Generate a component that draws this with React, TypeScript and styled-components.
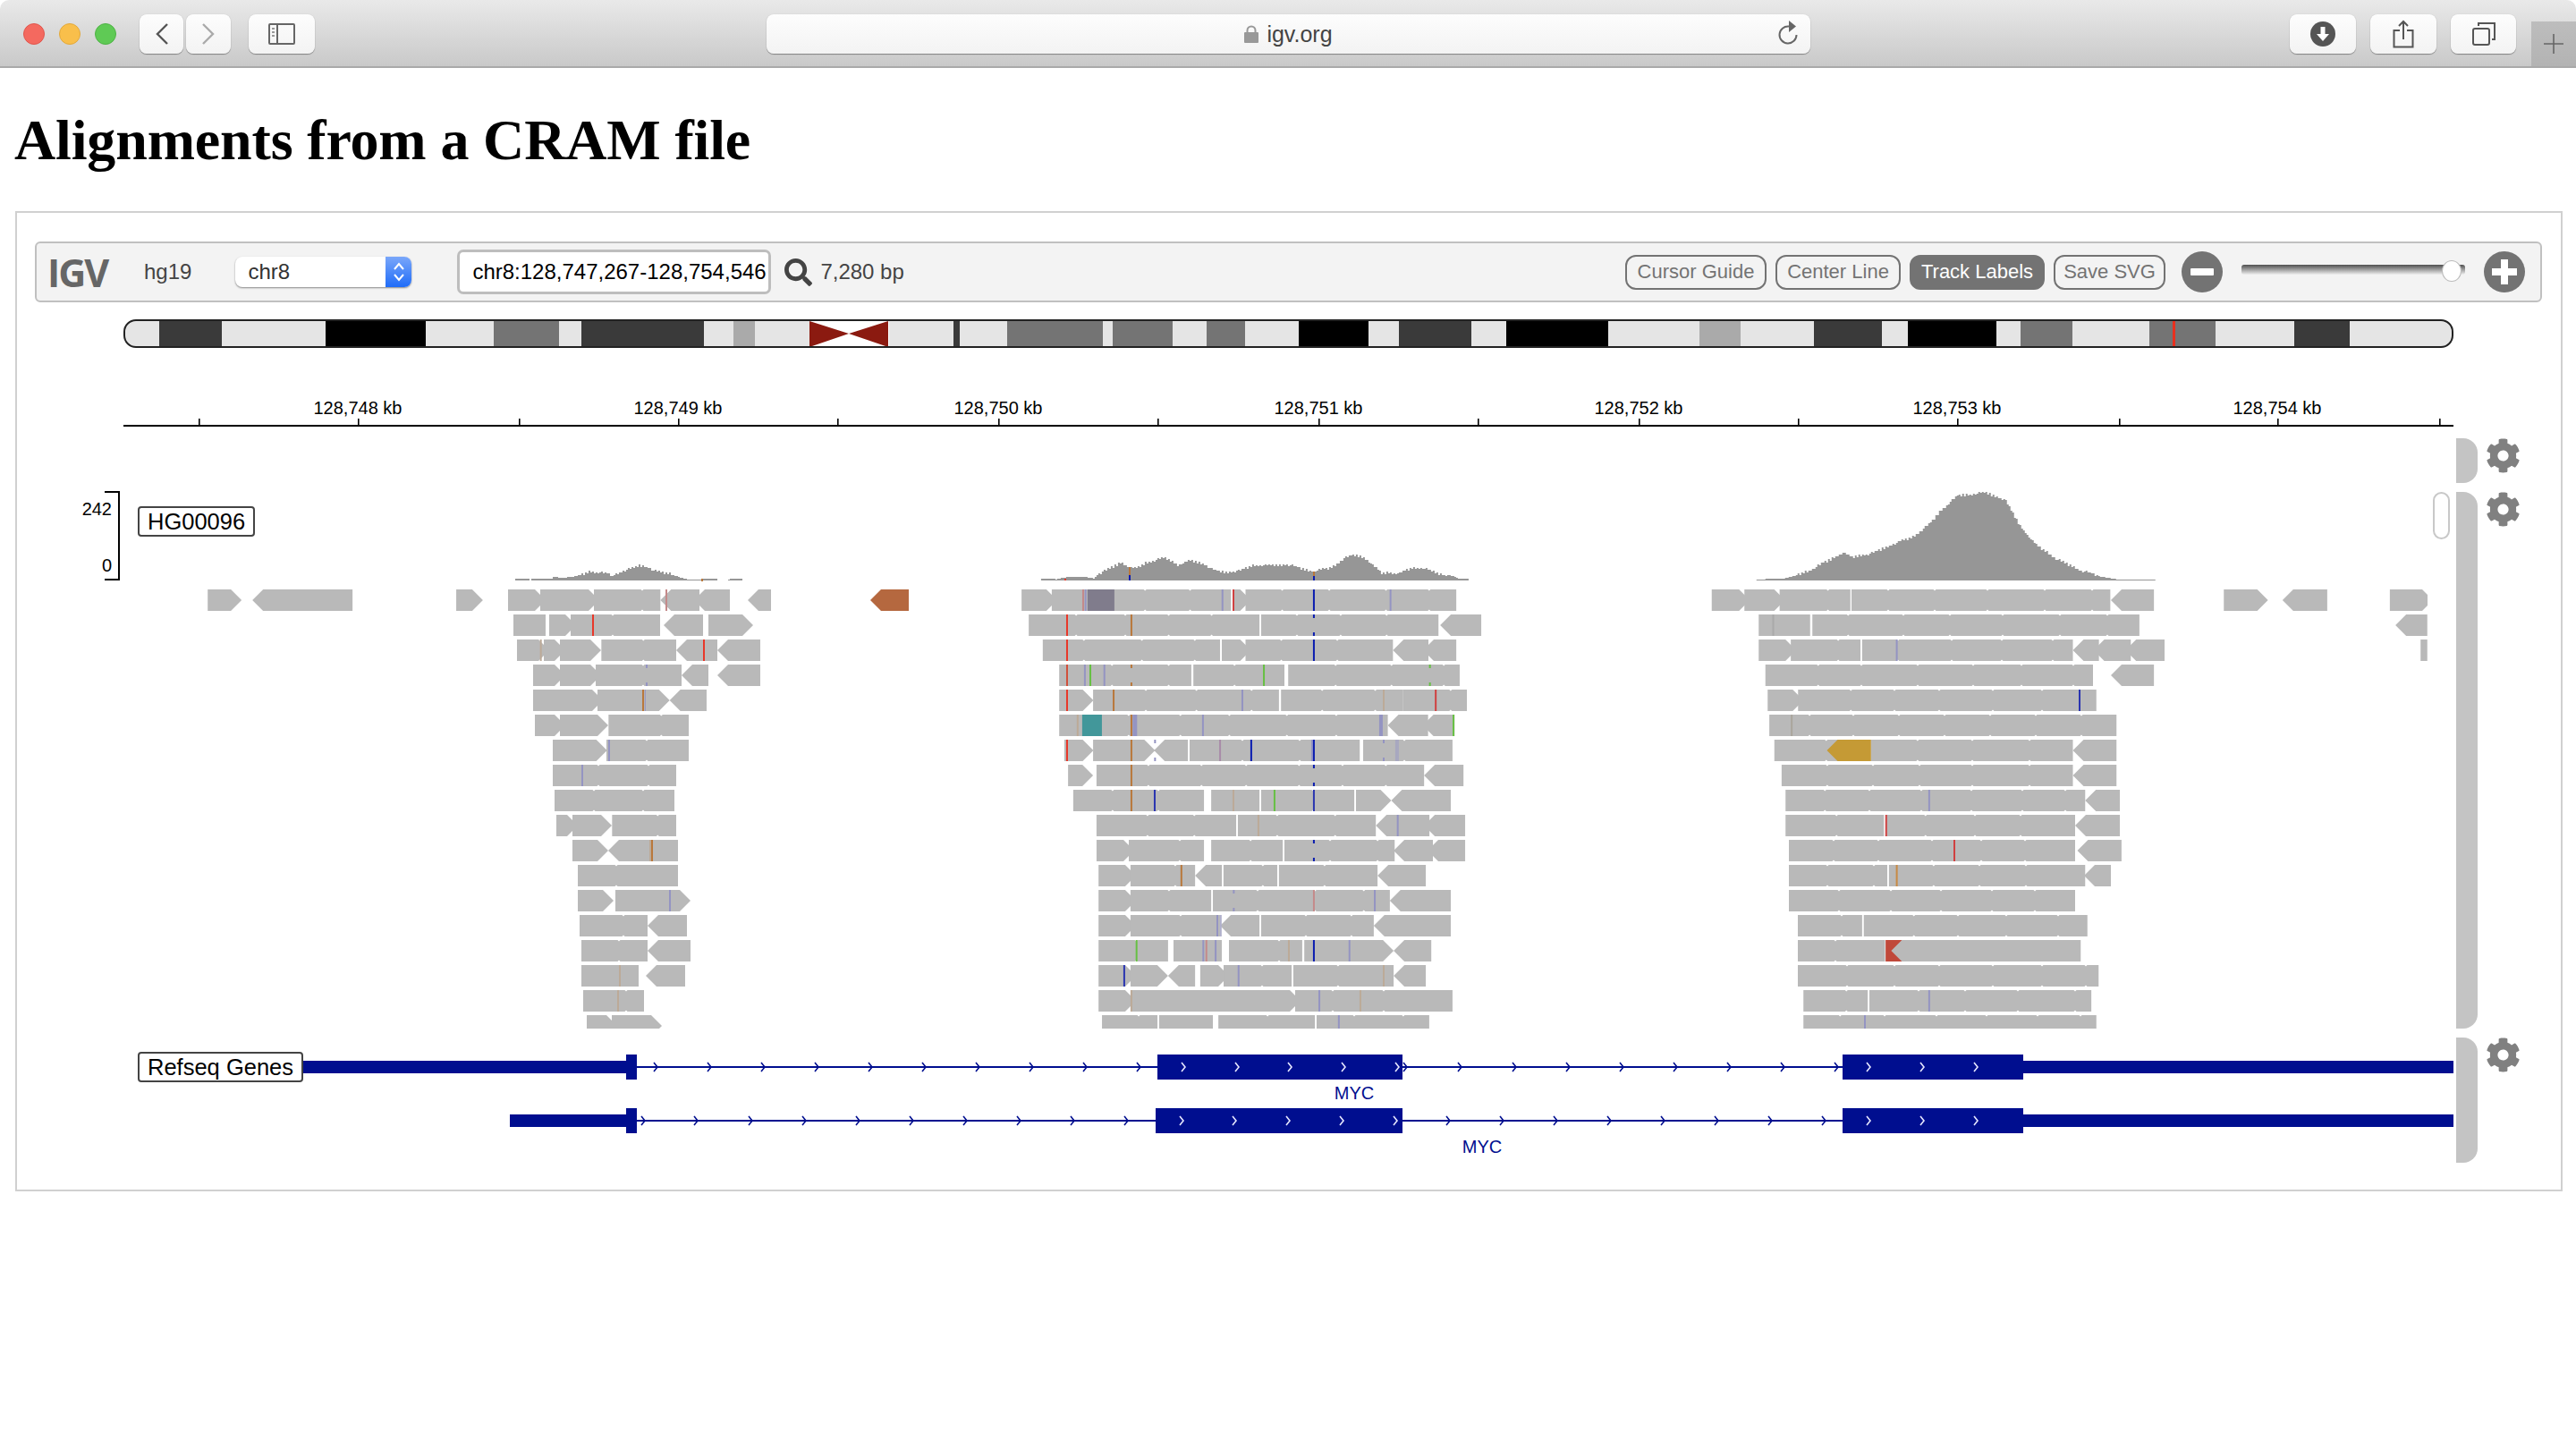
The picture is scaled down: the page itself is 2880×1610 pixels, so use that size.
import React from 'react';
import styled, { createGlobalStyle } from 'styled-components';
import { FaCog, FaSearch } from 'react-icons/fa';

const GlobalStyle = createGlobalStyle`
  html, body {
    margin: 0;
    background: #fff;
    font-family: "Liberation Sans", Arial, sans-serif;
  }
`;

const GREY = '#b9b9b9';
const BLUE = '#000e8f';
const RED = '#e8382a';
const ORANGE = '#b9783c';
const PURPLE = '#9494c2';
const NAVY = '#0a1cb0';
const GREEN = '#66c043';
const TAN = '#bcaa98';
const PINK = '#c48a8a';

/* ---- browser chrome ---- */

const Chrome = styled.div`
  display: flex;
  align-items: flex-start;
  box-sizing: border-box;
  height: 76px;
  padding: 16px 0 0 26px;
  border-radius: 10px 10px 0 0;
  border-bottom: 2px solid #a9a9a9;
  background: linear-gradient(#e9e9e9, #c9c9c9);
`;

const Lights = styled.div`
  display: flex;
  gap: 16px;
  margin-top: 10px;
`;

const Light = styled.span<{ $color: string; $edge: string }>`
  width: 24px;
  height: 24px;
  box-sizing: border-box;
  border-radius: 50%;
  background: ${(p) => p.$color};
  border: 1px solid ${(p) => p.$edge};
`;

const ChromeButton = styled.div<{ $width: number; $left?: number }>`
  display: flex;
  align-items: center;
  justify-content: center;
  width: ${(p) => p.$width}px;
  height: 44px;
  margin-left: ${(p) => p.$left ?? 0}px;
  border-radius: 8px;
  background: linear-gradient(#fdfdfd, #f3f3f3);
  box-shadow: 0 1px 1px rgba(0, 0, 0, 0.35), 0 0 1px rgba(0, 0, 0, 0.2);
`;

const UrlBar = styled.div`
  position: relative;
  display: flex;
  align-items: center;
  justify-content: center;
  gap: 9px;
  box-sizing: border-box;
  width: 1167px;
  height: 44px;
  margin-left: 505px;
  border-radius: 8px;
  background: linear-gradient(#fdfdfd, #f3f3f3);
  box-shadow: 0 1px 1px rgba(0, 0, 0, 0.35), 0 0 1px rgba(0, 0, 0, 0.2);
  color: #444;
  font-size: 25px;
`;

const ReloadSlot = styled.span`
  position: absolute;
  right: 13px;
  top: 7px;
  display: flex;
`;

const RightButtons = styled.div`
  display: flex;
  gap: 16px;
  margin-left: 536px;
`;

const NewTab = styled.div`
  display: flex;
  align-items: center;
  justify-content: center;
  width: 50px;
  height: 50px;
  margin: 8px 0 0 17px;
  background: linear-gradient(#bdbdbd, #b3b3b3);
`;

/* ---- page ---- */

const Title = styled.h1`
  margin: 44px 0 42px 16px;
  font-family: "Liberation Serif", "Times New Roman", serif;
  font-size: 64px;
  font-weight: bold;
  letter-spacing: -0.15px;
  line-height: 74px;
  color: #000;
`;

const Panel = styled.div`
  box-sizing: border-box;
  width: 2848px;
  margin-left: 17px;
  padding: 32px 0 30px;
  border: 2px solid #d0d0d0;
`;

const Toolbar = styled.div`
  display: flex;
  align-items: center;
  box-sizing: border-box;
  height: 68px;
  margin: 0 21px 0 20px;
  padding: 0 17px 0 12px;
  border: 2px solid #c0c0c0;
  border-radius: 6px;
  background: #f3f3f3;
`;

const Logo = styled.div`
  width: 70px;
  font-family: "Open Sans", sans-serif;
  font-size: 43px;
  font-weight: 700;
  letter-spacing: -2px;
  color: #666;
  line-height: 1;
`;

const Genome = styled.span`
  margin-left: 38px;
  font-size: 24px;
  color: #444;
`;

const ChromSelect = styled.div`
  display: flex;
  align-items: center;
  justify-content: space-between;
  box-sizing: border-box;
  width: 197px;
  height: 34px;
  margin-left: 49px;
  padding-left: 14px;
  border-radius: 8px;
  background: #fff;
  box-shadow: 0 1px 2px rgba(0, 0, 0, 0.45);
  font-size: 24px;
  color: #333;
  overflow: hidden;
`;

const Stepper = styled.span`
  display: flex;
  align-items: center;
  justify-content: center;
  width: 29px;
  height: 34px;
  background: linear-gradient(#7aa7fa, #1f6cf8);
`;

const LocusInput = styled.div`
  box-sizing: border-box;
  width: 351px;
  height: 50px;
  margin-left: 51px;
  padding-left: 14px;
  border: 3px solid #bdbdbd;
  border-radius: 7px;
  background: #fff;
  font-size: 24px;
  line-height: 44px;
  color: #000;
  white-space: nowrap;
`;

const SearchSlot = styled.span`
  display: flex;
  margin-left: 15px;
  color: #444;
`;

const WindowSize = styled.span`
  margin-left: 9px;
  font-size: 24px;
  color: #444;
`;

const Controls = styled.div`
  display: flex;
  align-items: center;
  margin-left: auto;
`;

const ToggleGroup = styled.div`
  display: flex;
  gap: 10px;
`;

const Toggle = styled.div<{ $on?: boolean; $width: number }>`
  box-sizing: border-box;
  width: ${(p) => p.$width}px;
  height: 39px;
  border: 2px solid #737373;
  border-radius: 12px;
  background: ${(p) => (p.$on ? '#737373' : 'transparent')};
  color: ${(p) => (p.$on ? '#fff' : '#737373')};
  font-size: 22px;
  line-height: 34px;
  text-align: center;
  white-space: nowrap;
`;

const ZoomButton = styled.svg<{ $left: number }>`
  display: block;
  margin-left: ${(p) => p.$left}px;
`;

const SliderTrack = styled.div`
  position: relative;
  width: 250px;
  height: 11px;
  margin: -5px 0 0 21px;
  border-radius: 3px;
  background: linear-gradient(#4f4f4f, #efefef);
`;

const SliderThumb = styled.span`
  position: absolute;
  left: 224px;
  top: -5px;
  box-sizing: border-box;
  width: 22px;
  height: 24px;
  border-radius: 50%;
  background: #fff;
  border: 1px solid #bbb;
`;

const Ideogram = styled.svg`
  display: block;
  margin: 19px 0 0 119px;
`;

const Ruler = styled.svg`
  display: block;
  margin: 51px 0 12px 119px;
  overflow: visible;
`;

const RulerLabel = styled.text`
  font-size: 20px;
  fill: #000;
  text-anchor: middle;
`;

const TrackRow = styled.div<{ $height: number; $gap?: number }>`
  display: flex;
  height: ${(p) => p.$height}px;
  margin-bottom: ${(p) => p.$gap ?? 0}px;
`;

const Gutter = styled.div`
  display: flex;
  justify-content: flex-end;
  width: 119px;
  flex: none;
`;

const DataRange = styled.div`
  display: flex;
  flex-direction: column;
  align-items: flex-end;
  justify-content: space-between;
  box-sizing: border-box;
  width: 17px;
  height: 100px;
  margin: -1px 4px 0 0;
  padding: 7px 7px 4px 0;
  border: solid #000;
  border-width: 2px 2px 2px 0;
  font-size: 20px;
  line-height: 22px;
  color: #000;
`;

const Viewport = styled.div`
  position: relative;
  width: 2605px;
  flex: none;
`;

const TrackCanvas = styled.svg`
  display: block;
`;

const TrackLabel = styled.div`
  position: absolute;
  left: 16px;
  top: 16px;
  box-sizing: border-box;
  height: 34px;
  padding: 0 9px;
  border: 2px solid #444;
  border-radius: 4px;
  background: #fff;
  font-size: 25.5px;
  line-height: 30px;
  color: #000;
  white-space: nowrap;
`;

const ScrollThumb = styled.div`
  position: absolute;
  right: 4px;
  top: 0;
  box-sizing: border-box;
  width: 19px;
  height: 53px;
  border: 2px solid #c8c8c8;
  border-radius: 10px;
  background: #fff;
`;

const ShadeBar = styled.div`
  width: 24px;
  margin-left: 3px;
  flex: none;
  border-radius: 0 16px 16px 0;
  background: #c4c4c4;
`;

const GearSlot = styled.div`
  display: flex;
  margin-left: 9px;
  color: #808080;
  height: 40px;
`;

const ReadShape = styled.polygon<{ $color?: string }>`
  fill: ${(p) => p.$color ?? GREY};
`;

const Mark = styled.rect<{ $color: string }>`
  fill: ${(p) => p.$color};
`;

const Coverage = styled.path`
  fill: #969696;
`;

const GeneBlock = styled.rect`
  fill: ${BLUE};
`;

const Chevron = styled.polyline<{ $light?: boolean }>`
  fill: none;
  stroke: ${(p) => (p.$light ? '#e6e8ff' : BLUE)};
  stroke-width: 1.6;
`;

const GeneName = styled.text`
  font-size: 20px;
  fill: ${BLUE};
  text-anchor: middle;
`;

/* ---- ideogram data ---- */

const L = '#e5e5e5';
const D = '#3a3a3a';
const K = '#000';
const M = '#747474';
const S = '#aaaaaa';

const bands: [number, number, string][] = [
  [138, 178, L], [178, 248, D], [248, 364, L], [364, 476, K], [476, 552, L], [552, 625, M],
  [625, 650, L], [650, 787, D], [787, 820, L], [820, 844, S], [844, 905, L], [994, 1066, L],
  [1066, 1073, D], [1073, 1126, L], [1126, 1233, M], [1233, 1244, L], [1244, 1311, M],
  [1311, 1349, L], [1349, 1392, M], [1392, 1452, L], [1452, 1530, K], [1530, 1564, L],
  [1564, 1645, D], [1645, 1684, L], [1684, 1798, K], [1798, 1900, L], [1900, 1946, S],
  [1946, 2028, L], [2028, 2104, D], [2104, 2133, L], [2133, 2232, K], [2232, 2259, L],
  [2259, 2317, M], [2317, 2403, L], [2403, 2477, M], [2477, 2565, L], [2565, 2627, D],
  [2627, 2743, L],
];

/* ---- alignment data, x values are in the scale of each cluster ---- */

type Dir = 'R' | 'L' | '-';
type Read = [number, number, Dir, string?];
type MarkDef = [number, string, number?, boolean?];
type Row = { r: Read[]; m?: MarkDef[] };
type Cluster = { ox: number; k: number; rows: Row[] };

const left: Cluster = {
  ox: 60,
  k: 1.742,
  rows: [{ r: [[300, 366, 'R'], [387, 582, 'L'], [784, 836, 'R']] }],
};

const brown: Cluster = {
  ox: 973,
  k: 1,
  rows: [{ r: [[0, 43, 'L', '#b5683f']] }],
};

const first: Cluster = {
  ox: 550,
  k: 3,
  rows: [
    { r: [[54, 180, 'R'], [180, 360, 'R'], [360, 565, '-'], [565, 678, 'L'], [678, 798, 'L'], [858, 936, 'L']], m: [[585, PINK]] },
    { r: [[72, 180, '-'], [192, 282, 'R'], [282, 564, '-'], [576, 708, 'L'], [726, 876, 'R']], m: [[339, RED]] },
    { r: [[84, 192, 'R'], [192, 246, 'R'], [246, 366, 'R'], [367, 618, '-'], [618, 684, 'L'], [684, 756, '-'], [756, 900, 'L']], m: [[164, TAN], [711, RED]] },
    { r: [[138, 246, 'R'], [246, 366, 'R'], [366, 636, '-'], [636, 726, 'L'], [756, 900, 'L']], m: [[519, PURPLE, 2, true]] },
    { r: [[138, 372, 'R'], [372, 516, '-'], [516, 596, 'R'], [596, 720, 'L']], m: [[507, ORANGE], [514, PURPLE, 1]] },
    { r: [[144, 246, 'R'], [246, 390, 'R'], [391, 660, '-']] },
    { r: [[204, 386, 'R'], [384, 660, '-']], m: [[393, PURPLE]] },
    { r: [[204, 618, '-']], m: [[303, PURPLE]] },
    { r: [[210, 612, '-']] },
    { r: [[216, 288, 'R'], [288, 402, 'R'], [403, 618, '-']] },
    { r: [[270, 390, 'R'], [390, 624, 'L']], m: [[531, TAN], [537, ORANGE]] },
    { r: [[288, 624, '-']] },
    { r: [[288, 408, 'R'], [414, 666, 'R']], m: [[597, PURPLE]] },
    { r: [[294, 522, '-'], [522, 654, 'L']] },
    { r: [[300, 522, '-'], [522, 666, 'L']] },
    { r: [[300, 492, '-'], [516, 648, 'L']], m: [[429, TAN]] },
    { r: [[306, 510, '-']], m: [[423, TAN]] },
    { r: [[318, 420, 'R'], [420, 570, 'R']] },
  ],
};

const second: Cluster = {
  ox: 1100,
  k: 2.613,
  rows: [
    {
      r: [[110, 214, 'R'], [214, 722, '-'], [728, 780, 'R'], [780, 1380, '-']],
      m: [[290, PINK], [297, PURPLE], [342, '#807c8c', 30], [697, PURPLE], [729, '#d04040'], [964, NAVY], [1188, PURPLE]],
    },
    { r: [[131, 805, '-'], [810, 1328, '-'], [1333, 1453, 'L']], m: [[243, RED], [431, ORANGE], [964, NAVY, 2, true]] },
    { r: [[172, 690, '-'], [695, 780, 'R'], [780, 1195, '-'], [1195, 1283, 'L'], [1283, 1380, 'L']], m: [[243, RED], [964, NAVY]] },
    {
      r: [[220, 606, '-'], [612, 878, '-'], [889, 1390, '-']],
      m: [[243, '#d0503c'], [295, PURPLE], [311, GREEN], [352, PURPLE], [431, ORANGE, 2, true], [818, GREEN], [1303, GREEN, 2, true]],
    },
    { r: [[220, 320, 'R'], [319, 862, '-'], [868, 1225, '-'], [1225, 1411, '-']], m: [[243, RED], [379, ORANGE], [755, PURPLE], [1168, TAN], [1320, '#d04040']] },
    {
      r: [[220, 288, '-'], [287, 1180, '-'], [1180, 1282, 'L'], [1282, 1375, 'L']],
      m: [[274, TAN], [316, '#42979a', 22], [431, ORANGE], [441, PURPLE, 5], [640, PURPLE], [1160, PURPLE, 4], [1372, GREEN]],
    },
    {
      r: [[235, 320, 'R'], [319, 500, 'R'], [497, 596, 'L'], [601, 1098, '-'], [1108, 1369, '-']],
      m: [[243, RED], [431, ORANGE], [500, PURPLE, 2, true], [690, '#a88ca8'], [781, NAVY], [960, PURPLE, 3], [964, NAVY], [1168, PURPLE, 2, true], [1207, '#a8a8c0', 4]],
    },
    { r: [[246, 319, 'R'], [329, 1286, '-'], [1286, 1401, 'L']], m: [[431, ORANGE], [964, NAVY, 2, true]] },
    { r: [[261, 643, '-'], [664, 805, '-'], [810, 1082, '-'], [1087, 1190, 'R'], [1190, 1364, 'L']], m: [[431, ORANGE], [499, '#2a35b0'], [729, TAN], [849, GREEN], [964, '#2a35b0']] },
    { r: [[329, 737, '-'], [742, 1145, '-'], [1145, 1286, 'L'], [1286, 1406, 'L']], m: [[802, TAN], [1209, PURPLE]] },
    { r: [[329, 439, 'R'], [439, 643, '-'], [664, 873, '-'], [878, 1200, '-'], [1197, 1296, 'L'], [1296, 1406, 'L']], m: [[964, NAVY, 2, true]] },
    { r: [[335, 444, 'R'], [444, 617, '-'], [617, 695, 'L'], [700, 857, '-'], [862, 1150, '-'], [1150, 1291, 'L']], m: [[577, ORANGE]] },
    { r: [[335, 444, 'R'], [444, 664, '-'], [669, 1186, '-'], [1186, 1364, 'L']], m: [[730, PURPLE, 2, true], [964, PINK], [1142, PURPLE]] },
    { r: [[335, 444, 'R'], [444, 690, '-'], [690, 805, 'L'], [810, 1139, '-'], [1139, 1364, 'L']], m: [[682, PURPLE], [692, '#b0b0cc']] },
    {
      r: [[335, 538, '-'], [554, 695, '-'], [716, 930, '-'], [936, 1197, 'R'], [1197, 1307, 'L']],
      m: [[446, GREEN], [641, PURPLE], [650, PINK], [677, PURPLE], [891, TAN], [964, NAVY], [1068, PURPLE]],
    },
    { r: [[335, 444, 'R'], [444, 538, 'R'], [538, 617, 'L'], [632, 716, 'R'], [716, 899, '-'], [904, 1197, '-'], [1197, 1291, 'L']], m: [[410, '#2a35b0'], [744, PURPLE], [1168, TAN]] },
    { r: [[335, 444, 'R'], [444, 925, 'R'], [925, 1369, '-']], m: [[431, TAN], [980, PURPLE], [1100, TAN]] },
    { r: [[345, 507, '-'], [512, 669, '-'], [685, 967, '-'], [972, 1301, '-']], m: [[1037, PURPLE]] },
  ],
};

const third: Cluster = {
  ox: 1900,
  k: 1.6,
  rows: [
    { r: [[22, 90, 'R'], [90, 153, 'R'], [153, 270, '-'], [272, 735, '-'], [736, 813, 'L'], [938, 1017, 'R'], [1043, 1123, 'L'], [1235, 1312, 'R']] },
    { r: [[106, 198, '-'], [202, 787, '-'], [1245, 1302, 'L']], m: [[132, '#aaa']] },
    { r: [[106, 173, 'R'], [173, 288, '-'], [291, 668, '-'], [668, 705, 'L'], [705, 762, 'L'], [762, 832, 'L'], [1290, 1302, '-']], m: [[353, PURPLE]] },
    { r: [[118, 704, '-'], [736, 813, 'L']] },
    { r: [[122, 186, 'R'], [186, 710, '-']], m: [[680, '#2a35b0']] },
    { r: [[125, 746, '-']], m: [[165, '#aaa59c']] },
    { r: [[134, 250, '-'], [228, 307, 'L', '#c59a35'], [307, 668, '-'], [668, 746, 'L']] },
    { r: [[147, 668, '-'], [668, 746, 'L']] },
    { r: [[154, 690, '-'], [690, 752, 'L']], m: [[411, PURPLE]] },
    { r: [[154, 330, '-'], [334, 672, '-'], [672, 752, 'L']], m: [[334, '#d04040']] },
    { r: [[160, 672, '-'], [676, 755, 'L']], m: [[456, '#d04040']] },
    { r: [[160, 336, '-'], [339, 690, '-'], [688, 736, 'L']], m: [[353, '#c88a44']] },
    { r: [[160, 672, '-']] },
    { r: [[176, 291, '-'], [294, 694, '-']] },
    { r: [[176, 332, '-'], [333, 365, '-', '#c0483a'], [343, 682, 'L']] },
    { r: [[176, 714, '-']] },
    { r: [[186, 301, '-'], [304, 701, '-']], m: [[411, PURPLE]] },
    { r: [[186, 710, '-']], m: [[296, PURPLE]] },
  ],
};

const ROW_TOP = 659;
const ROW_PITCH = 28;
const ROW_H = 24;
const TIP = 12;
const OVERLAP = 6;

function readPoints(x0: number, x1: number, dir: Dir, y: number) {
  const y2 = y + ROW_H;
  const mid = y + ROW_H / 2;
  if (dir === 'R') return `${x0},${y} ${x1 - TIP},${y} ${x1},${mid} ${x1 - TIP},${y2} ${x0},${y2}`;
  if (dir === 'L') return `${x0 + TIP},${y} ${x1},${y} ${x1},${y2} ${x0 + TIP},${y2} ${x0},${mid}`;
  return `${x0},${y} ${x1},${y} ${x1},${y2} ${x0},${y2}`;
}

// reads that touch overlap a little, so only part of the arrow notch stays white
function touchOverlap(reads: Read[], j: number) {
  const [a, , dir, color] = reads[j];
  const prev = reads[j - 1];
  if (!prev || prev[1] !== a || color) return 0;
  if (dir === '-' && prev[2] === 'R') return OVERLAP;
  if (dir === 'R' && prev[2] === 'R') return OVERLAP;
  return 0;
}

function ClusterReads({ cluster }: { cluster: Cluster }) {
  const px = (s: number) => cluster.ox + s / cluster.k;
  return (
    <>
      {cluster.rows.map((row, i) => {
        const y = ROW_TOP + i * ROW_PITCH;
        return (
          <g key={i}>
            {row.r.map(([a, b, dir, color], j) => {
              const x0 = px(a) - touchOverlap(row.r, j);
              const next = row.r[j + 1];
              // an arrow pointing left into its neighbour keeps a smaller notch too
              const x1 = px(b) + (next && next[0] === b && dir === 'L' && next[2] === 'L' ? OVERLAP : 0);
              const seams: number[] = [];
              if (dir === '-' && !color) {
                for (let x = x0 + 40 + ((i * 13 + j * 7) % 20); x < x1 - 14; x += 48 + ((x * 7) % 17)) seams.push(x);
              }
              return (
                <g key={j}>
                  <ReadShape points={readPoints(x0, x1, dir, y)} $color={color} />
                  {seams.map((x) => (
                    <React.Fragment key={x}>
                      <ReadShape points={`${x - 1.5},${y} ${x + 1.5},${y} ${x},${y + 1.5}`} $color="#fff" />
                      <ReadShape points={`${x - 1.5},${y + ROW_H} ${x + 1.5},${y + ROW_H} ${x},${y + ROW_H - 1.5}`} $color="#fff" />
                    </React.Fragment>
                  ))}
                </g>
              );
            })}
            {(row.m ?? []).map(([s, color, w = 2, short], j) =>
              short ? (
                <React.Fragment key={j}>
                  <Mark x={px(s) - w / 2} y={y} width={w} height={4} $color={color} />
                  <Mark x={px(s) - w / 2} y={y + ROW_H - 4} width={w} height={4} $color={color} />
                </React.Fragment>
              ) : (
                <Mark key={j} x={px(s) - w / 2} y={y} width={w} height={ROW_H} $color={color} />
              ),
            )}
          </g>
        );
      })}
    </>
  );
}

/* ---- coverage ---- */

const BASE = 649;

const hump1: [number, number][] = [
  [576, 2], [590, 2], [592, 0], [594, 2], [617, 2], [618, 4], [628, 3], [640, 4], [650, 7], [660, 10], [668, 9],
  [678, 8], [683, 4], [690, 8], [695, 11], [705, 13], [714, 17], [724, 15], [730, 11], [740, 9], [750, 7], [760, 3],
  [768, 1], [800, 2], [802, 0], [813, 0], [815, 2], [828, 2],
];

const hump2: [number, number][] = (
  [
    [167, 132], [205, 132], [206, 137], [208, 137], [209, 132], [245, 126], [293, 126], [320, 131], [335, 115], [365, 100], [400, 80],
    [425, 97], [440, 100], [475, 80], [525, 65], [565, 88], [600, 75], [640, 85], [670, 105], [700, 112], [750, 105],
    [790, 88], [860, 90], [880, 85], [920, 98], [960, 108], [1010, 98], [1050, 68], [1075, 58], [1110, 65],
    [1160, 115], [1180, 112], [1210, 115], [1250, 98], [1280, 98], [1330, 117], [1365, 122], [1385, 132], [1411, 132],
  ] as [number, number][]
).map(([s, y]) => [1100 + s / 2.613, (137 - y) / 2.8]);

const hump3: [number, number][] = (
  [
    [102, 302], [150, 300], [165, 294], [190, 282], [225, 255], [255, 232], [270, 243], [310, 232], [345, 208],
    [380, 190], [410, 155], [430, 120], [460, 80], [510, 72], [545, 90], [570, 155], [600, 210], [640, 250], [680, 278],
    [720, 296], [745, 302], [813, 302],
  ] as [number, number][]
).map(([s, y]) => [1900 + s / 1.6, (305 - y) / 2.376]);

function stepped(points: [number, number][]) {
  let d = `M${points[0][0]} ${BASE}`;
  let p = 0;
  for (let x = points[0][0]; x <= points[points.length - 1][0]; x += 2) {
    while (p < points.length - 2 && points[p + 1][0] < x) p++;
    const [x0, h0] = points[p];
    const [x1, h1] = points[p + 1];
    const h = h0 + ((h1 - h0) * (x - x0)) / (x1 - x0 || 1);
    const wobble = h > 6 ? (Math.round(x * 3.7) % 3) - 1 : 0;
    d += `V${BASE - Math.max(0, Math.round(h + wobble * 1.2))}h2`;
  }
  return `${d}V${BASE}Z`;
}

/* ---- genes ---- */

const gene1Introns = [733, 793, 853, 913, 973, 1033, 1093, 1153, 1213, 1273, 1571, 1632, 1693, 1753, 1813, 1873, 1933, 1993, 2053];
const gene2Introns = [719, 778, 839, 899, 959, 1019, 1079, 1139, 1199, 1259, 1619, 1679, 1739, 1799, 1859, 1919, 1979, 2039];
const gene1Exons = [1323, 1383, 1442, 1502, 1562, 2089, 2149, 2209];
const gene2Exons = [1321, 1380, 1440, 1500, 1560, 2089, 2149, 2209];

function Gene({ mid, utrStart, exonStart, introns, exons }: { mid: number; utrStart: number; exonStart: number; introns: number[]; exons: number[] }) {
  const chevron = (x: number) => `${x - 2},${mid - 5} ${x + 2},${mid} ${x - 2},${mid + 5}`;
  return (
    <g>
      <GeneBlock x={utrStart} y={mid - 7} width={700 - utrStart} height={14} />
      <GeneBlock x={700} y={mid - 14} width={12} height={28} />
      <GeneBlock x={712} y={mid - 1} width={1348} height={2} />
      <GeneBlock x={exonStart} y={mid - 14} width={1568 - exonStart} height={28} />
      <GeneBlock x={2060} y={mid - 14} width={202} height={28} />
      <GeneBlock x={2262} y={mid - 7} width={481} height={14} />
      {introns.map((x) => (
        <Chevron key={x} points={chevron(x)} />
      ))}
      {exons.map((x) => (
        <Chevron key={x} $light points={chevron(x)} />
      ))}
    </g>
  );
}

const ticks = [223, 401, 581, 759, 937, 1117, 1295, 1475, 1653, 1833, 2011, 2189, 2370, 2547, 2728];
const labels: [number, string][] = [
  [400, '128,748 kb'], [758, '128,749 kb'], [1116, '128,750 kb'], [1474, '128,751 kb'],
  [1832, '128,752 kb'], [2188, '128,753 kb'], [2546, '128,754 kb'],
];

export default function App() {
  return (
    <>
      <GlobalStyle />
      <Chrome>
        <Lights>
          <Light $color="#f4695f" $edge="#e0564d" />
          <Light $color="#f9bf4b" $edge="#e2a93c" />
          <Light $color="#5fca55" $edge="#4fb346" />
        </Lights>
        <ChromeButton $width={49} $left={26}>
          <svg width="16" height="24" viewBox="0 0 16 24">
            <path d="M14 1 3 12l11 11" fill="none" stroke="#555" strokeWidth="2.4" />
          </svg>
        </ChromeButton>
        <ChromeButton $width={50} $left={3}>
          <svg width="16" height="24" viewBox="0 0 16 24">
            <path d="M2 1l11 11L2 23" fill="none" stroke="#aaa" strokeWidth="2.4" />
          </svg>
        </ChromeButton>
        <ChromeButton $width={74} $left={20}>
          <svg width="30" height="24" viewBox="0 0 30 24">
            <rect x="1" y="1" width="28" height="22" rx="1" fill="none" stroke="#666" strokeWidth="2" />
            <path d="M10 1v22" stroke="#666" strokeWidth="2" />
            <path d="M4 6h3M4 10h3M4 14h3" stroke="#999" strokeWidth="2" />
          </svg>
        </ChromeButton>
        <UrlBar>
          <svg width="16" height="20" viewBox="0 0 16 20">
            <path d="M3.5 9V6a4.5 4.5 0 0 1 9 0v3" fill="none" stroke="#999" strokeWidth="2" />
            <rect y="8" width="16" height="12" rx="1" fill="#999" />
          </svg>
          <span>igv.org</span>
          <ReloadSlot>
            <svg width="24" height="28" viewBox="0 0 24 28">
              <path d="M13 6.5A9.5 9.5 0 1 0 21.5 16" fill="none" stroke="#666" strokeWidth="2" />
              <path d="M13 0l8 6.500-8 6.500z" fill="#666" />
            </svg>
          </ReloadSlot>
        </UrlBar>
        <RightButtons>
          <ChromeButton $width={74}>
            <svg width="28" height="28" viewBox="0 0 28 28">
              <circle cx="14" cy="14" r="14" fill="#555" />
              <path d="M11.500 6h5v8h4.500L14 22l-7-8h4.500z" fill="#fff" />
            </svg>
          </ChromeButton>
          <ChromeButton $width={74}>
            <svg width="24" height="32" viewBox="0 0 24 32">
              <path d="M8 12H1.500v18.500h21V12H16" fill="none" stroke="#555" strokeWidth="2" />
              <path d="M12 22V2M7 7l5-5 5 5" fill="none" stroke="#555" strokeWidth="2" />
            </svg>
          </ChromeButton>
          <ChromeButton $width={73}>
            <svg width="26" height="26" viewBox="0 0 26 26">
              <rect x="1" y="7" width="18" height="18" rx="2" fill="none" stroke="#555" strokeWidth="2" />
              <path d="M7 4V1h18v18h-3" fill="none" stroke="#555" strokeWidth="2" />
            </svg>
          </ChromeButton>
        </RightButtons>
        <NewTab>
          <svg width="22" height="22" viewBox="0 0 22 22">
            <path d="M0 11h22M11 0v22" stroke="#666" strokeWidth="1.600" />
          </svg>
        </NewTab>
      </Chrome>

      <Title>Alignments from a CRAM file</Title>

      <Panel>
        <Toolbar>
          <Logo>IGV</Logo>
          <Genome>hg19</Genome>
          <ChromSelect>
            chr8
            <Stepper>
              <svg width="14" height="24" viewBox="0 0 14 24">
                <path d="M2 9l5-6 5 6M2 15l5 6 5-6" fill="none" stroke="#fff" strokeWidth="2" />
              </svg>
            </Stepper>
          </ChromSelect>
          <LocusInput>chr8:128,747,267-128,754,546</LocusInput>
          <SearchSlot>
            <FaSearch size={31} />
          </SearchSlot>
          <WindowSize>7,280 bp</WindowSize>
          <Controls>
            <ToggleGroup>
              <Toggle $width={158}>Cursor Guide</Toggle>
              <Toggle $width={140}>Center Line</Toggle>
              <Toggle $width={151} $on>Track Labels</Toggle>
              <Toggle $width={125}>Save SVG</Toggle>
            </ToggleGroup>
            <ZoomButton $left={18} width="46" height="46" viewBox="0 0 46 46">
              <circle cx="23" cy="23" r="23" fill="#737373" />
              <rect x="10" y="19" width="26" height="8" rx="1" fill="#fff" />
            </ZoomButton>
            <SliderTrack>
              <SliderThumb />
            </SliderTrack>
            <ZoomButton $left={21} width="46" height="46" viewBox="0 0 46 46">
              <circle cx="23" cy="23" r="23" fill="#737373" />
              <path d="M19 9h8v10h10v8H27v10h-8V27H9v-8h10z" fill="#fff" />
            </ZoomButton>
          </Controls>
        </Toolbar>

        <Ideogram width="2605" height="32" viewBox="138 357 2605 32">
          <defs>
            <clipPath id="chrom-clip">
              <rect x="139" y="358" width="2603" height="30" rx="13" />
            </clipPath>
          </defs>
          <g clipPath="url(#chrom-clip)">
            {bands.map(([a, b, c]) => (
              <rect key={a} x={a} y="358" width={b - a} height="30" fill={c} />
            ))}
            <path d="M905 358h88l-44 15z" fill="#fff" />
            <path d="M905 388h88l-44-15z" fill="#fff" />
            <path d="M905 359l44 14-44 15zM993 359l-44 14 44 15z" fill="#8b1a10" />
            <rect x="2429" y="358" width="3" height="30" fill="#e8301e" />
          </g>
          <rect x="139" y="358" width="2603" height="30" rx="13" fill="none" stroke="#222" strokeWidth="2" />
        </Ideogram>

        <Ruler width="2605" height="38" viewBox="138 440 2605 38">
          {labels.map(([x, t]) => (
            <RulerLabel key={t} x={x} y="463">
              {t}
            </RulerLabel>
          ))}
          {ticks.map((x) => (
            <rect key={x} x={x - 1} y="468" width="1.600" height="8" fill="#000" />
          ))}
          <rect x="138" y="475" width="2605" height="2" fill="#000" />
        </Ruler>

        <TrackRow $height={50} $gap={10}>
          <Gutter />
          <Viewport />
          <ShadeBar />
          <GearSlot>
            <FaCog size={39} />
          </GearSlot>
        </TrackRow>

        <TrackRow $height={600} $gap={10}>
          <Gutter>
            <DataRange>
              <span>242</span>
              <span>0</span>
            </DataRange>
          </Gutter>
          <Viewport>
            <TrackCanvas width="2605" height="600" viewBox="138 550 2605 600">
              <defs>
                <clipPath id="reads-clip">
                  <rect x="138" y="650" width="2576" height="500" />
                </clipPath>
              </defs>
              <Coverage d={stepped(hump1)} />
              <Coverage d={stepped(hump2)} />
              <Coverage d={stepped(hump3)} />
              <Mark x="784" y="647" width="2" height="3" $color={ORANGE} />
              <Mark x="1190" y="647" width="2" height="2" $color={RED} />
              <Mark x="1262" y="634" width="2" height="9" $color={ORANGE} />
              <Mark x="1262" y="643" width="2" height="6" $color={NAVY} />
              <Mark x="1468" y="639" width="2" height="5" $color={ORANGE} />
              <Mark x="1468" y="644" width="2" height="5" $color={NAVY} />
              <g clipPath="url(#reads-clip)">
                <ClusterReads cluster={left} />
                <ClusterReads cluster={brown} />
                <ClusterReads cluster={first} />
                <ClusterReads cluster={second} />
                <ClusterReads cluster={third} />
              </g>
            </TrackCanvas>
            <TrackLabel>HG00096</TrackLabel>
            <ScrollThumb />
          </Viewport>
          <ShadeBar />
          <GearSlot>
            <FaCog size={39} />
          </GearSlot>
        </TrackRow>

        <TrackRow $height={140}>
          <Gutter />
          <Viewport>
            <TrackCanvas width="2605" height="140" viewBox="138 1160 2605 140">
              <Gene mid={1193} utrStart={330} exonStart={1294} introns={gene1Introns} exons={gene1Exons} />
              <GeneName x="1514" y="1229">MYC</GeneName>
              <Gene mid={1253} utrStart={570} exonStart={1292} introns={gene2Introns} exons={gene2Exons} />
              <GeneName x="1657" y="1289">MYC</GeneName>
            </TrackCanvas>
            <TrackLabel>Refseq Genes</TrackLabel>
          </Viewport>
          <ShadeBar />
          <GearSlot>
            <FaCog size={39} />
          </GearSlot>
        </TrackRow>
      </Panel>
    </>
  );
}
